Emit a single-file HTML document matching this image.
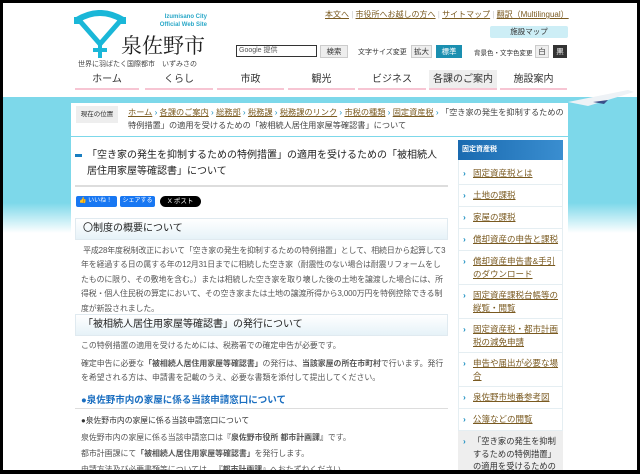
<!DOCTYPE html>
<html><head><meta charset="utf-8">
<style>
*{margin:0;padding:0;box-sizing:border-box}
body{width:640px;height:474px;overflow:hidden;background:#000;font-family:"Liberation Sans","Noto Sans CJK JP",sans-serif;color:#333}
#pg{position:absolute;left:3px;top:3px;width:634px;height:467px;overflow:hidden;background:#fff}
.a{position:absolute;white-space:nowrap}
a,.u{color:#7a5a20;text-decoration:underline}
.band{position:absolute;left:0;top:94px;width:634px;height:126px;background:#7dd8ea}
.nav div{position:absolute;top:67px;height:20px;font-size:10px;text-align:center;line-height:19px;border-bottom:2px solid #f7c5d3;color:#333}
.side div{position:absolute;left:455px;width:105px;font-size:8.5px;line-height:12.5px;border-bottom:1px solid #e5eef2;padding-left:15px}
.side div:before{content:"›";position:absolute;left:5px;color:#1a8ec0;font-weight:bold}
.p{font-size:7.9px;line-height:14.4px;color:#555}
</style></head><body><div id="pg">
<div class="band"></div>
<div class="a" style="left:0;top:200px;width:634px;height:30px;background:linear-gradient(#7dd8ea,#fff)"></div>
<svg class="a" style="left:70px;top:7px" width="55" height="50" viewBox="0 0 55 50">
<path d="M4 10 Q27 -4 50 10" stroke="#1ab7d8" stroke-width="6" fill="none"/>
<path d="M6 10 L27 34 L48 10" stroke="#1ab7d8" stroke-width="5" fill="none"/>
<path d="M27 30 L27 48 M20 40 L34 40" stroke="#1ab7d8" stroke-width="4" fill="none"/>
<rect x="1" y="7" width="7" height="7" fill="#1ab7d8"/><rect x="46" y="7" width="7" height="7" fill="#1ab7d8"/>
</svg>
<div class="a" style="left:142px;top:10px;font-size:6px;color:#2aa8c8;font-weight:bold;text-align:right;width:62px;line-height:8px">Izumisano City<br>Official Web Site</div>
<div class="a" style="left:118px;top:27px;font-size:21px;font-family:'Liberation Serif','Noto Serif CJK SC',serif;color:#222">泉佐野市</div>
<div class="a" style="left:75px;top:56px;font-size:7px;color:#444">世界に羽ばたく国際都市　いずみさの</div>
<div class="a" style="left:322px;top:6px;font-size:8px"><span class="u">本文へ</span> <span style="color:#ccc">|</span> <span class="u">市役所へお越しの方へ</span> <span style="color:#ccc">|</span> <span class="u">サイトマップ</span> <span style="color:#ccc">|</span> <span class="u">翻訳（Multilingual）</span></div>
<div class="a" style="left:487px;top:23px;width:78px;height:12px;background:#cdeef6;border-radius:2px;font-size:7.5px;text-align:center;line-height:12px">施設マップ</div>
<div class="a" style="left:233px;top:42px;width:81px;height:12px;border:1px solid #333;font-size:7px;line-height:10px;padding-left:2px;color:#555">Google 提供</div>
<div class="a" style="left:317px;top:42px;width:28px;height:13px;background:#eee;border:1px solid #ccc;font-size:7.5px;text-align:center;line-height:11px">検索</div>
<div class="a" style="left:355px;top:44px;font-size:7px">文字サイズ変更</div>
<div class="a" style="left:408px;top:42px;width:21px;height:13px;background:#eee;border:1px solid #ccc;font-size:7.5px;text-align:center;line-height:11px">拡大</div>
<div class="a" style="left:433px;top:42px;width:26px;height:13px;background:#1a8fb0;color:#fff;font-size:7.5px;text-align:center;line-height:13px">標準</div>
<div class="a" style="left:471px;top:44px;font-size:6.5px">背景色・文字色変更</div>
<div class="a" style="left:532px;top:42px;width:14px;height:13px;background:#eee;border:1px solid #ccc;font-size:7.5px;text-align:center;line-height:11px">白</div>
<div class="a" style="left:550px;top:42px;width:14px;height:13px;background:#333;color:#fff;font-size:7.5px;text-align:center;line-height:13px">黒</div>
<div class="nav">
<div style="left:72px;width:64px">ホーム</div>
<div style="left:142px;width:68px">くらし</div>
<div style="left:214px;width:67px">市政</div>
<div style="left:285px;width:67px">観光</div>
<div style="left:355px;width:68px">ビジネス</div>
<div style="left:426px;width:68px;background:#eee">各課のご案内</div>
<div style="left:497px;width:67px">施設案内</div>
</div>
<svg class="a" style="left:565px;top:85px" width="69" height="22"><path d="M0 14 L60 2 L66 4 L20 18 Z" fill="#eef2f6"/><path d="M25 14 L40 12 L36 16Z" fill="#3a4f8a"/></svg>
<div class="a" style="left:68px;top:100px;width:497px;height:33px;background:#fff"></div>
<div class="a" style="left:73px;top:103px;width:42px;height:17px;background:#eee;font-size:6.5px;line-height:17px;text-align:center">現在の位置</div>
<div class="a" style="left:125px;top:103px;font-size:8.2px;line-height:13px;color:#444;white-space:normal;width:440px"><span class="u">ホーム</span> <span style="color:#1a8ec0">›</span> <span class="u">各課のご案内</span> <span style="color:#1a8ec0">›</span> <span class="u">総務部</span> <span style="color:#1a8ec0">›</span> <span class="u">税務課</span> <span style="color:#1a8ec0">›</span> <span class="u">税務課のリンク</span> <span style="color:#1a8ec0">›</span> <span class="u">市税の種類</span> <span style="color:#1a8ec0">›</span> <span class="u">固定資産税</span> <span style="color:#1a8ec0">›</span> 「空き家の発生を抑制するための特例措置」の適用を受けるための「被相続人居住用家屋等確認書」について</div>
<div class="a" style="left:68px;top:134px;width:497px;height:340px;background:#fff"></div>
<div class="a" style="left:72px;top:151px;width:7px;height:3px;background:#1a7ec0"></div>
<div class="a" style="left:84px;top:145px;font-size:10px;line-height:16px;color:#222;white-space:normal;width:352px">「空き家の発生を抑制するための特例措置」の適用を受けるための「被相続人居住用家屋等確認書」について</div>
<div class="a" style="left:72px;top:182px;width:373px;height:2px;background:#ddd"></div>
<div class="a" style="left:73px;top:193px;width:41px;height:11px;background:#1877f2;color:#fff;font-size:6px;line-height:11px;padding-left:3px;border-radius:2px">👍 いいね！</div>
<div class="a" style="left:117px;top:193px;width:35px;height:11px;background:#1877f2;color:#fff;font-size:6px;line-height:11px;text-align:center;border-radius:2px">シェアする</div>
<div class="a" style="left:157px;top:193px;width:41px;height:11px;background:#000;color:#fff;font-size:6.5px;line-height:11px;text-align:center;border-radius:6px">X ポスト</div>
<div class="a" style="left:72px;top:215px;width:373px;height:22px;background:linear-gradient(#fff,#e6f2f8);border:1px solid #e0eaf0;font-size:10px;line-height:20px;padding-left:7px;color:#222">〇制度の概要について</div>
<div class="a p" style="left:78px;top:241px;width:366px;white-space:normal;letter-spacing:-0.1px">&nbsp;平成28年度税制改正において「空き家の発生を抑制するための特例措置」として、相続日から起算して3年を経過する日の属する年の12月31日までに相続した空き家（耐震性のない場合は耐震リフォームをしたものに限り、その敷地を含む。）または相続した空き家を取り壊した後の土地を譲渡した場合には、所得税・個人住民税の算定において、その空き家または土地の譲渡所得から3,000万円を特例控除できる制度が新設されました。</div>
<div class="a" style="left:72px;top:311px;width:373px;height:22px;background:linear-gradient(#fff,#e6f2f8);border:1px solid #e0eaf0;font-size:10px;line-height:20px;padding-left:7px;color:#222">「被相続人居住用家屋等確認書」の発行について</div>
<div class="a p" style="left:78px;top:336px;width:366px;white-space:normal">この特例措置の適用を受けるためには、税務署での確定申告が必要です。</div>
<div class="a p" style="left:78px;top:354px;width:366px;white-space:normal">確定申告に必要な<b>「被相続人居住用家屋等確認書」</b>の発行は、<b>当該家屋の所在市町村</b>で行います。発行を希望される方は、申請書を記載のうえ、必要な書類を添付して提出してください。</div>
<div class="a" style="left:78px;top:389px;font-size:9.5px;color:#1a6ec0;font-weight:bold">●泉佐野市内の家屋に係る当該申請窓口について</div>
<div class="a" style="left:72px;top:405px;width:373px;height:1px;background:#ddd"></div>
<div class="a" style="left:78px;top:412px;font-size:7.8px;color:#333">●泉佐野市内の家屋に係る当該申請窓口について</div>
<div class="a p" style="left:78px;top:428px">泉佐野市内の家屋に係る当該申請窓口は<b>『泉佐野市役所 都市計画課』</b>です。</div>
<div class="a p" style="left:78px;top:444px">都市計画課にて<b>「被相続人居住用家屋等確認書」</b>を発行します。</div>
<div class="a p" style="left:78px;top:460px">申請方法及び必要書類等については、<b>『都市計画課』</b>へおたずねください。</div>
<div class="a" style="left:455px;top:137px;width:105px;height:20px;background:linear-gradient(90deg,#1a6ab0,#3a8ed0);color:#fff;font-size:7px;font-weight:bold;line-height:20px;padding-left:4px">固定資産税</div>
<div class="a" style="left:455px;top:157px;width:105px;height:320px;border-left:1px solid #e5eef2;border-right:1px solid #e5eef2"></div>
<div class="side">
<div style="top:160px;height:22px;padding-top:4px"><span class="u">固定資産税とは</span></div>
<div style="top:182px;height:22px;padding-top:4px"><span class="u">土地の課税</span></div>
<div style="top:204px;height:22px;padding-top:4px"><span class="u">家屋の課税</span></div>
<div style="top:226px;height:22px;padding-top:4px"><span class="u">償却資産の申告と課税</span></div>
<div style="top:248px;height:34px;padding-top:4px"><span class="u">償却資産申告書&amp;手引のダウンロード</span></div>
<div style="top:282px;height:34px;padding-top:4px"><span class="u">固定資産課税台帳等の縦覧・閲覧</span></div>
<div style="top:316px;height:34px;padding-top:4px"><span class="u">固定資産税・都市計画税の減免申請</span></div>
<div style="top:350px;height:34px;padding-top:4px"><span class="u">申告や届出が必要な場合</span></div>
<div style="top:384px;height:22px;padding-top:4px"><span class="u">泉佐野市地番参考図</span></div>
<div style="top:406px;height:22px;padding-top:4px"><span class="u">公簿などの閲覧</span></div>
<div style="top:428px;height:50px;padding-top:4px;background:#eee;color:#333;font-size:8.3px">「空き家の発生を抑制するための特例措置」の適用を受けるための</div>
</div>
</div></body></html>
